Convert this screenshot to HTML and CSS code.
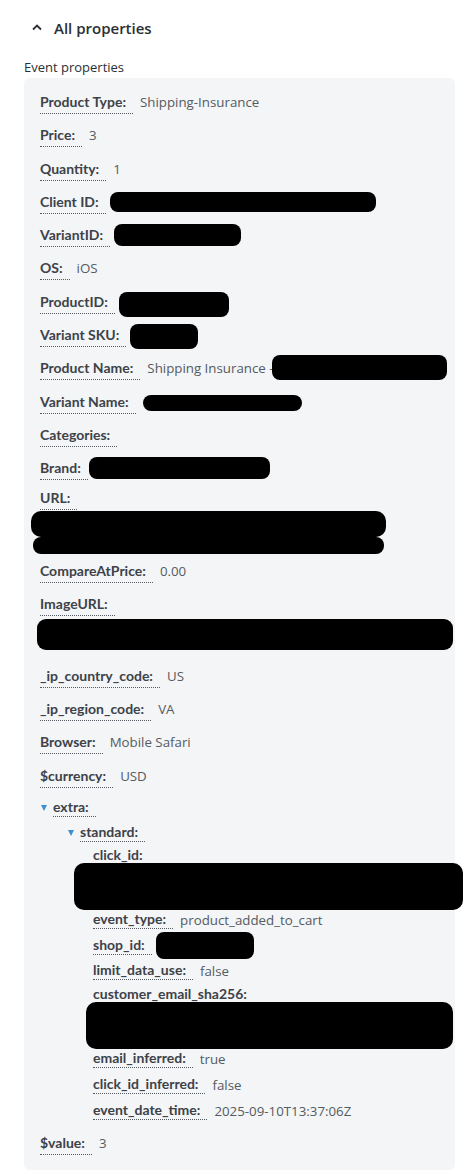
FILE: index.html
```html
<!DOCTYPE html>
<html lang="en">

<head>
    <meta charset="UTF-8">
    <meta name="viewport" content="width=device-width, initial-scale=1.0">
    <title>All properties</title>
    <link rel="stylesheet" href="styles.css">
</head>

<body>
    <div class="section">
        <div class="toggle">
            <svg class="chevron" width="12" height="8" viewBox="0 0 12 8">
                <polyline points="2,6.5 6,2.5 10,6.5" fill="none" stroke="#2b2f33" stroke-width="1.8" />
            </svg>
            <span>All properties</span>
        </div>
        <div class="caption">Event properties</div>

        <div class="panel">
            <div class="row"><span class="key">Product Type:</span><span class="val">Shipping-Insurance</span></div>
            <div class="row"><span class="key">Price:</span><span class="val">3</span></div>
            <div class="row"><span class="key">Quantity:</span><span class="val">1</span></div>
            <div class="row"><span class="key">Client ID:</span><span class="redact r-client"></span></div>
            <div class="row"><span class="key">VariantID:</span><span class="redact r-variant"></span></div>
            <div class="row"><span class="key">OS:</span><span class="val">iOS</span></div>
            <div class="row"><span class="key">ProductID:</span><span class="redact r-product"></span></div>
            <div class="row"><span class="key">Variant SKU:</span><span class="redact r-sku"></span></div>
            <div class="row"><span class="key">Product Name:</span><span class="val">Shipping Insurance -</span><span class="redact r-pname"></span></div>
            <div class="row"><span class="key">Variant Name:</span><span class="redact r-vname"></span></div>
            <div class="row"><span class="key">Categories:</span></div>
            <div class="row"><span class="key">Brand:</span><span class="redact r-brand"></span></div>

            <div class="row row-wrap row-url">
                <span class="key">URL:</span>
                <div class="b-url">
                    <div class="b-url-top"></div>
                    <div class="b-url-bottom"></div>
                </div>
            </div>
            <div class="row"><span class="key">CompareAtPrice:</span><span class="val">0.00</span></div>
            <div class="row row-wrap row-image">
                <span class="key">ImageURL:</span>
                <div class="block-redact b-image"></div>
            </div>
            <div class="row"><span class="key">_ip_country_code:</span><span class="val">US</span></div>
            <div class="row"><span class="key">_ip_region_code:</span><span class="val">VA</span></div>
            <div class="row"><span class="key">Browser:</span><span class="val">Mobile Safari</span></div>
            <div class="row"><span class="key">$currency:</span><span class="val">USD</span></div>

            <div class="node node-top">
                <div class="row row-sub"><span class="caret"></span><span class="key">extra:</span></div>
                <div class="children">
                    <div class="node">
                        <div class="row row-sub"><span class="caret"></span><span class="key">standard:</span></div>
                        <div class="children">
                            <div class="row row-sub row-wrap">
                                <span class="key key-plain">click_id:</span>
                                <div class="block-redact b-click"></div>
                            </div>
                            <div class="row row-sub"><span class="key">event_type:</span><span class="val">product_added_to_cart</span></div>
                            <div class="row row-sub"><span class="key">shop_id:</span><span class="redact r-shop"></span></div>
                            <div class="row row-sub"><span class="key">limit_data_use:</span><span class="val">false</span></div>
                            <div class="row row-sub row-wrap">
                                <span class="key key-plain">customer_email_sha256:</span>
                                <div class="block-redact b-email"></div>
                            </div>
                            <div class="row row-sub"><span class="key">email_inferred:</span><span class="val">true</span></div>
                            <div class="row row-sub"><span class="key">click_id_inferred:</span><span class="val">false</span></div>
                            <div class="row row-sub"><span class="key">event_date_time:</span><span class="val">2025-09-10T13:37:06Z</span></div>
                        </div>
                    </div>
                </div>
            </div>

            <div class="row row-last"><span class="key">$value:</span><span class="val">3</span></div>
        </div>
    </div>
</body>

</html>
```

FILE: styles.css
```css
body {
    margin: 0;
    background: #fff;
    font-family: 'Open Sans', 'Noto Sans', sans-serif;
}

.section {
    padding: 16px 10px 0 24px;
}

.toggle {
    display: flex;
    align-items: center;
    height: 24px;
    padding-left: 7px;
    font-size: 15px;
    font-weight: 600;
    color: #2b2f33;
}

.chevron {
    margin-right: 11px;
    margin-top: -2px;
}

.caption {
    margin-top: 18px;
    font-size: 13px;
    line-height: 18px;
    color: #2b2f33;
}

.panel {
    margin-top: 2px;
    width: 431px;
    box-sizing: border-box;
    background: #f3f5f7;
    border-radius: 6px;
    padding: 14px 0 15px 16px;
}

/* rows */

.row {
    display: flex;
    align-items: flex-start;
    margin-bottom: 11.3px;
}

.key {
    font-family: 'Lato', sans-serif;
    font-weight: 700;
    font-size: 14px;
    line-height: 20px;
    color: #3d4249;
    padding-right: 7px;
    padding-bottom: 1px;
    border-bottom: 1px dotted #555a60;
}

.val {
    font-size: 13.3px;
    line-height: 20px;
    color: #555b61;
    margin-left: 7px;
}

.row-wrap {
    flex-direction: column;
}

.row-url {
    margin-top: -4px;
    margin-bottom: 7px;
}

.row-image {
    margin-bottom: 16px;
}

.row-sub {
    margin-bottom: 6px;
}

.row-sub .key {
    line-height: 18px;
    padding-bottom: 0;
}

.row-sub.row-wrap {
    margin-top: -2px;
    margin-bottom: 0;
}

.row-sub .key-plain {
    border-bottom-color: transparent;
}

.row-last {
    margin-bottom: 0;
}

/* tree */

.node-top {
    margin-top: -1px;
    margin-bottom: 12px;
}

.caret {
    width: 0;
    height: 0;
    margin: 7px 6px 0 1px;
    border-left: 3.5px solid transparent;
    border-right: 3.5px solid transparent;
    border-top: 6px solid #3b8fd2;
}

.children {
    padding-left: 27px;
}

.children .children {
    padding-left: 26px;
}

/* redacted values */

.redact {
    display: block;
    background: #000;
    border-radius: 8px;
    margin-bottom: -10px;
}

.r-client {
    width: 266px;
    height: 20px;
    margin-left: 4px;
}

.r-variant {
    width: 127px;
    height: 22px;
    margin-left: 4px;
    margin-top: -1px;
}

.r-product {
    width: 110px;
    height: 25px;
    margin-left: 4px;
}

.r-sku {
    width: 68px;
    height: 25px;
    margin-left: 4px;
    margin-top: -1px;
}

.r-pname {
    width: 175px;
    height: 25px;
    margin-left: -2px;
    margin-top: -3px;
}

.r-vname {
    width: 159px;
    height: 16px;
    margin-left: 7px;
    margin-top: 3px;
}

.r-brand {
    width: 181px;
    height: 22px;
    margin-left: 1px;
    margin-top: -1px;
}

.r-shop {
    width: 98px;
    height: 27px;
    margin-left: 4px;
    margin-top: -4px;
}

.block-redact {
    background: #000;
}

.b-url {
    margin: 1px 0 0 -9px;
}

.b-url-top {
    width: 355px;
    height: 26px;
    background: #000;
    border-radius: 10px;
}

.b-url-bottom {
    width: 351px;
    height: 17px;
    margin-left: 2px;
    background: #000;
    border-radius: 8px;
}

.b-image {
    width: 416px;
    height: 31px;
    margin: 3px 0 0 -3px;
    border-radius: 9px;
}

.b-click {
    width: 389px;
    height: 47px;
    margin: -2px 0 0 -19px;
    border-radius: 10px;
}

.b-email {
    width: 367px;
    height: 47px;
    margin: -2px 0 0 -7px;
    border-radius: 10px;
}
```
